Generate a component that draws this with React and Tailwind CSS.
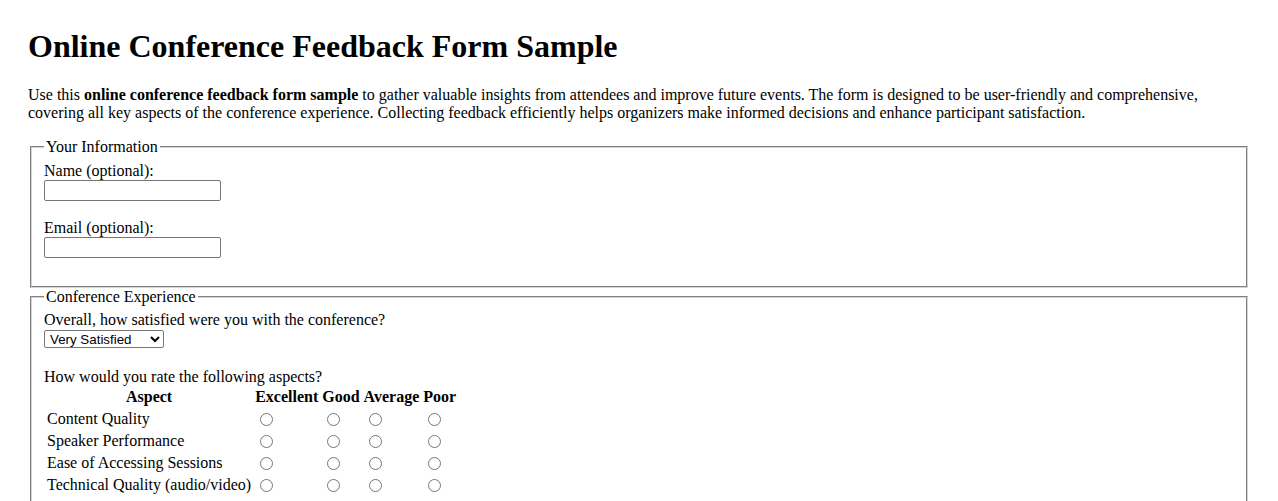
import React from "react";

const fieldsetCls =
  "mx-[2px] border-2 [border-style:groove] border-[#d4d4d4] pt-[5.6px] pb-[10px] px-[12px] min-w-0";
const legendCls = "px-[2px] leading-[normal]";
const inputCls =
  "block w-[177px] h-[21px] border border-[#767676] rounded-[2px] px-[2px] bg-white text-[13.33px] [font-family:Arial,'Liberation_Sans',sans-serif]";

const aspects = [
  "Content Quality",
  "Speaker Performance",
  "Ease of Accessing Sessions",
  "Technical Quality (audio/video)",
];

function Radio({ name }) {
  return (
    <input
      type="radio"
      name={name}
      className="m-[3px_3px_0_5px] w-[13px] h-[13px] align-[-2px]"
    />
  );
}

export default function App() {
  return (
    <div className="bg-white text-black text-[16px] leading-[normal] [font-family:'Liberation_Serif','Times_New_Roman',serif] px-[28px] pt-[28px] pb-[40px]">
      <h1 className="text-[32px] font-bold leading-[normal] mb-[21.44px]">
        Online Conference Feedback Form Sample
      </h1>
      <p className="mb-[16px]">
        Use this <strong className="font-bold">online conference feedback form sample</strong> to
        gather valuable insights from attendees and improve future events. The form is designed to
        be user-friendly and comprehensive, covering all key aspects of the conference experience.
        Collecting feedback efficiently helps organizers make informed decisions and enhance
        participant satisfaction.
      </p>
      <form>
        <fieldset className={fieldsetCls}>
          <legend className={legendCls}>Your Information</legend>
          <label className="block h-[18px]">Name (optional):</label>
          <input type="text" className={inputCls} />
          <div className="h-[18px]" />
          <label className="block h-[18px]">Email (optional):</label>
          <input type="email" className={inputCls} />
          <div className="h-[17.6px]" />
        </fieldset>
        <fieldset className={fieldsetCls}>
          <legend className={legendCls}>Conference Experience</legend>
          <label className="block h-[18px]">Overall, how satisfied were you with the conference?</label>
          <select className="block mt-[1px] w-[120px] h-[18px] border border-[#767676] rounded-[2px] bg-white text-[13.33px] leading-none pl-[1px] [font-family:Arial,'Liberation_Sans',sans-serif]" defaultValue="Very Satisfied">
            <option>Very Satisfied</option>
            <option>Satisfied</option>
            <option>Neutral</option>
            <option>Dissatisfied</option>
            <option>Very Dissatisfied</option>
          </select>
          <div className="h-[20px]" />
          <p className="h-[17px]">How would you rate the following aspects?</p>
          <table className="border-separate border-spacing-[2px]">
            <thead>
              <tr>
                <th className="p-[1px] font-bold text-center">Aspect</th>
                <th className="p-[1px] font-bold text-center">Excellent</th>
                <th className="p-[1px] font-bold text-center">Good</th>
                <th className="p-[1px] font-bold text-center">Average</th>
                <th className="p-[1px] font-bold text-center">Poor</th>
              </tr>
            </thead>
            <tbody>
              {aspects.map((a, i) => (
                <tr key={a}>
                  <td className="p-[1px] text-left">{a}</td>
                  <td className="p-[1px] text-left"><Radio name={"a" + i} /></td>
                  <td className="p-[1px] text-left"><Radio name={"a" + i} /></td>
                  <td className="p-[1px] text-left"><Radio name={"a" + i} /></td>
                  <td className="p-[1px] text-left"><Radio name={"a" + i} /></td>
                </tr>
              ))}
            </tbody>
          </table>
          <div className="h-[18px]" />
          <label className="block h-[18px]">What did you like most about the conference?</label>
          <textarea className="block w-[300px] h-[60px] border border-[#767676]" />
          <div className="h-[18px]" />
        </fieldset>
      </form>
    </div>
  );
}
